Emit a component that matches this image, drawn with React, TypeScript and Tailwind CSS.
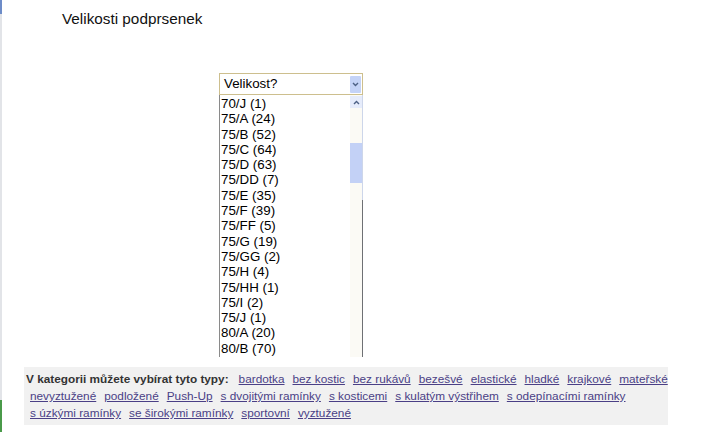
const sizes = [
  "70/J (1)",
  "75/A (24)",
  "75/B (52)",
  "75/C (64)",
  "75/D (63)",
  "75/DD (7)",
  "75/E (35)",
  "75/F (39)",
  "75/FF (5)",
  "75/G (19)",
  "75/GG (2)",
  "75/H (4)",
  "75/HH (1)",
  "75/I (2)",
  "75/J (1)",
  "80/A (20)",
  "80/B (70)",
];

const typeRows = [
  ["bardotka", "bez kostic", "bez rukávů", "bezešvé", "elastické", "hladké", "krajkové", "mateřské"],
  ["nevyztužené", "podložené", "Push-Up", "s dvojitými ramínky", "s kosticemi", "s kulatým výstřihem", "s odepínacími ramínky"],
  ["s úzkými ramínky", "se širokými ramínky", "sportovní", "vyztužené"],
];

const Chevron = ({ up }: { up?: boolean }) => (
  <svg width="7" height="5" viewBox="0 0 7 5">
    <path
      d={up ? "M1 4 L3.5 1.5 L6 4" : "M1 1 L3.5 3.5 L6 1"}
      fill="none"
      stroke="#4d6185"
      strokeWidth="1.4"
    />
  </svg>
);

const App = () => {
  return (
    <div className="flex w-[720px] h-[432px] bg-white font-['Liberation_Sans',Arial,sans-serif] overflow-hidden">
      <div className="flex flex-col w-[2px] shrink-0">
        <div className="h-[14px] bg-[#6d8cc8]" />
        <div className="flex-1 bg-[#e2e4e8]" />
        <div className="h-[32px] bg-[#4a9a4a]" />
      </div>

      <div className="flex flex-col flex-1">
        <h1 className="ml-[60px] mt-[10px] text-[15.3px] leading-[18px] text-[#111]">
          Velikosti podprsenek
        </h1>

        <div className="ml-[217px] mt-[45px] w-[144px] flex flex-col">
          <div className="flex items-center h-[22px] border border-[#cdbf8e] bg-white pl-[4px] pr-[1px]">
            <span className="flex-1 text-[13.33px] leading-[16px] text-black">Velikost?</span>
            <div className="flex items-center justify-center w-[11px] h-[17px] bg-[#c4d3f7] rounded-[1px]">
              <Chevron />
            </div>
          </div>

          <div className="flex h-[262px] border-l border-[#8a8a8a] bg-white">
            <ul className="flex-1 pl-[1px] pt-[1px]">
              {sizes.map((s) => (
                <li key={s} className="text-[13.33px] leading-[15.3px] text-black whitespace-nowrap">
                  {s}
                </li>
              ))}
            </ul>
            <div className="flex flex-col w-[12px] bg-[#fbfaf5]">
              <div className="flex items-center justify-center h-[12px] mt-[1px] bg-[#e6ecfb]">
                <Chevron up />
              </div>
              <div className="h-[35px]" />
              <div className="h-[40px] bg-[#c3d1f6]" />
            </div>
            <div className="flex flex-col w-[1px]">
              <div className="h-[105px] bg-[#cdd6ea]" />
              <div className="flex-1 bg-[#6e7074]" />
            </div>
          </div>
        </div>

        <div className="ml-[22px] mt-[10px] w-[644px] bg-[#f1f1f1] pl-[2px] pt-[4px] pb-[3px] text-[11.8px] leading-[17px]">
          {typeRows.map((row, i) => (
            <div key={i} className="flex whitespace-nowrap">
              {i === 0 && (
                <span className="font-bold text-[#333] mr-[6px]">
                  V kategorii můžete vybírat tyto typy:
                </span>
              )}
              {row.map((t) => (
                <a key={t} href="#" className="mx-[4px] text-[#4a3f86] underline">
                  {t}
                </a>
              ))}
            </div>
          ))}
        </div>
      </div>
    </div>
  );
};

export default App;
